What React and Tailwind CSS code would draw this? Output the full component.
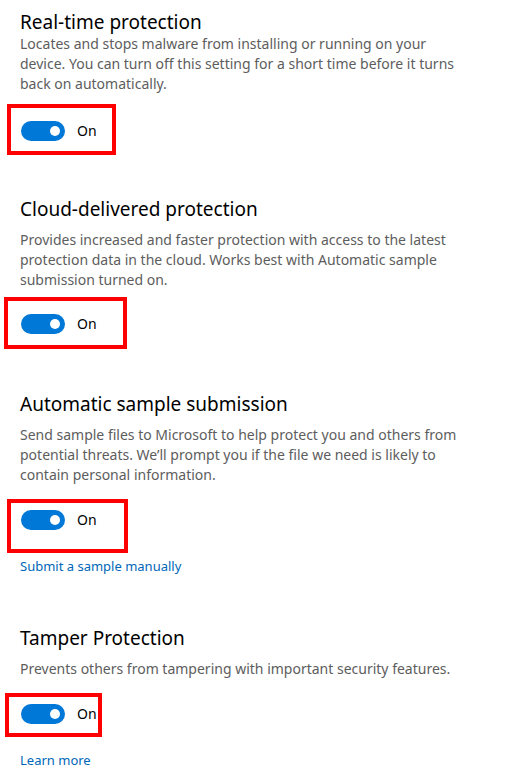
function Toggle({ box }) {
  return (
    <div className="relative flex items-center h-5 ml-px">
      {/* annotation box drawn over the toggle */}
      <div className={`absolute border-4 border-[#ff0000] pointer-events-none ${box}`} />
      <div className="w-11 h-5 rounded-full bg-[#0078d7] flex items-center justify-end pr-[5px]">
        <div className="w-[10px] h-[10px] rounded-full bg-white" />
      </div>
      <span className="ml-3 text-sm text-black leading-5">On</span>
    </div>
  );
}

export default function App() {
  return (
    <div
      className="w-[516px] h-[776px] bg-white overflow-hidden px-5 pt-[10px]"
      style={{ fontFamily: '"Segoe UI", "Noto Sans", sans-serif' }}
    >
      {/* Real-time protection */}
      <h2 className="text-[19px] leading-6 font-normal text-black">Real-time protection</h2>
      <p className="text-sm leading-5 text-[#5d5d5d]">
        Locates and stops malware from installing or running on your
        <br />
        device. You can turn off this setting for a short time before it turns
        <br />
        back on automatically.
      </p>
      <div className="mt-[27px]">
        <Toggle box="-top-[17px] -left-[14px] w-[109px] h-[51px]" />
      </div>

      {/* Cloud-delivered protection */}
      <h2 className="mt-[56px] text-[19px] leading-6 font-normal text-black">Cloud-delivered protection</h2>
      <p className="mt-[9px] text-sm leading-5 text-[#5d5d5d]">
        Provides increased and faster protection with access to the latest
        <br />
        protection data in the cloud. Works best with Automatic sample
        <br />
        submission turned on.
      </p>
      <div className="mt-6">
        <Toggle box="-top-[17px] -left-[17px] w-[123px] h-[52px]" />
      </div>

      {/* Automatic sample submission */}
      <h2 className="mt-[58px] text-[19px] leading-6 font-normal text-black">Automatic sample submission</h2>
      <p className="mt-[9px] text-sm leading-5 text-[#5d5d5d]">
        Send sample files to Microsoft to help protect you and others from
        <br />
        potential threats. We’ll prompt you if the file we need is likely to
        <br />
        contain personal information.
      </p>
      <div className="mt-[25px]">
        <Toggle box="-top-[11px] -left-[14px] w-[121px] h-[54px]" />
      </div>
      <a href="#" className="block mt-[26px] text-[13px] leading-5 text-[#0067b8]">
        Submit a sample manually
      </a>

      {/* Tamper Protection */}
      <h2 className="mt-[50px] text-[19px] leading-6 font-normal text-black">Tamper Protection</h2>
      <p className="mt-[9px] text-sm leading-5 text-[#5d5d5d]">
        Prevents others from tampering with important security features.
      </p>
      <div className="mt-[25px]">
        <Toggle box="-top-[11px] -left-[16px] w-[97px] h-[44px]" />
      </div>
      <a href="#" className="block mt-[26px] text-[13px] leading-5 text-[#0067b8]">
        Learn more
      </a>
    </div>
  );
}
